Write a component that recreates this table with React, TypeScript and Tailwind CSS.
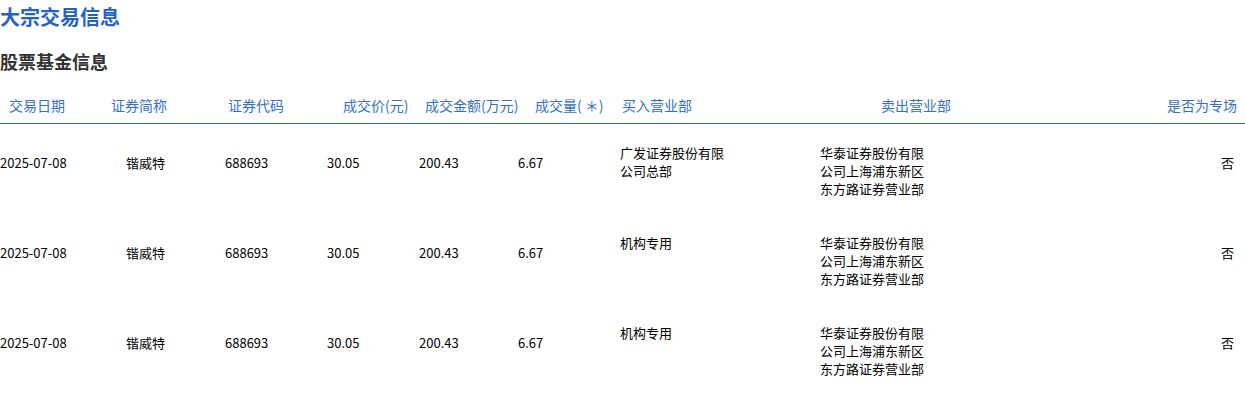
import React from "react";

const rows = [
  { buy: ["广发证券股份有限", "公司总部"] },
  { buy: ["机构专用"] },
  { buy: ["机构专用"] },
];

const sell = ["华泰证券股份有限", "公司上海浦东新区", "东方路证券营业部"];

export default function App() {
  return (
    <div
      className="w-[1245px] h-[394px] bg-white overflow-hidden"
      style={{ fontFamily: '"Noto Sans CJK SC", "Noto Sans", sans-serif' }}
    >
      <h1 className="mt-[3px] text-[20px] leading-[28px] font-bold text-[#2463c4]">
        大宗交易信息
      </h1>
      <h2 className="mt-[17px] text-[18px] leading-[26px] font-bold text-[#333333]">
        股票基金信息
      </h2>
      <div className="mt-[14px] flex h-[36px] items-start pt-[7px] border-b border-[#2d6cc4] text-[14px] leading-[20px] text-[#3570c6]">
        <div className="w-[111px] pl-[9px]">交易日期</div>
        <div className="w-[117px]">证券简称</div>
        <div className="w-[115px]">证券代码</div>
        <div className="w-[82px]">成交价(元)</div>
        <div className="w-[110px]">成交金额(万元)</div>
        <div className="w-[87px]">成交量( ＊)</div>
        <div className="w-[259px]">买入营业部</div>
        <div className="w-[286px]">卖出营业部</div>
        <div className="flex-1">是否为专场</div>
      </div>
      {rows.map((r, i) => (
        <div key={i} className="flex h-[90px] items-start text-[13px] leading-[18px] text-black">
          <div className="w-[126px] pt-[30px]">2025-07-08</div>
          <div className="w-[99px] pt-[30px]">锴威特</div>
          <div className="w-[102px] pt-[30px]">688693</div>
          <div className="w-[92px] pt-[30px]">30.05</div>
          <div className="w-[99px] pt-[30px]">200.43</div>
          <div className="w-[102px] pt-[30px]">6.67</div>
          <div className="w-[200px] pt-[20px]">
            {r.buy.map((t) => (
              <div key={t}>{t}</div>
            ))}
          </div>
          <div className="w-[200px] pt-[20px]">
            {sell.map((t) => (
              <div key={t}>{t}</div>
            ))}
          </div>
          <div className="flex-1 pt-[30px] pr-[11px] text-right">否</div>
        </div>
      ))}
    </div>
  );
}
